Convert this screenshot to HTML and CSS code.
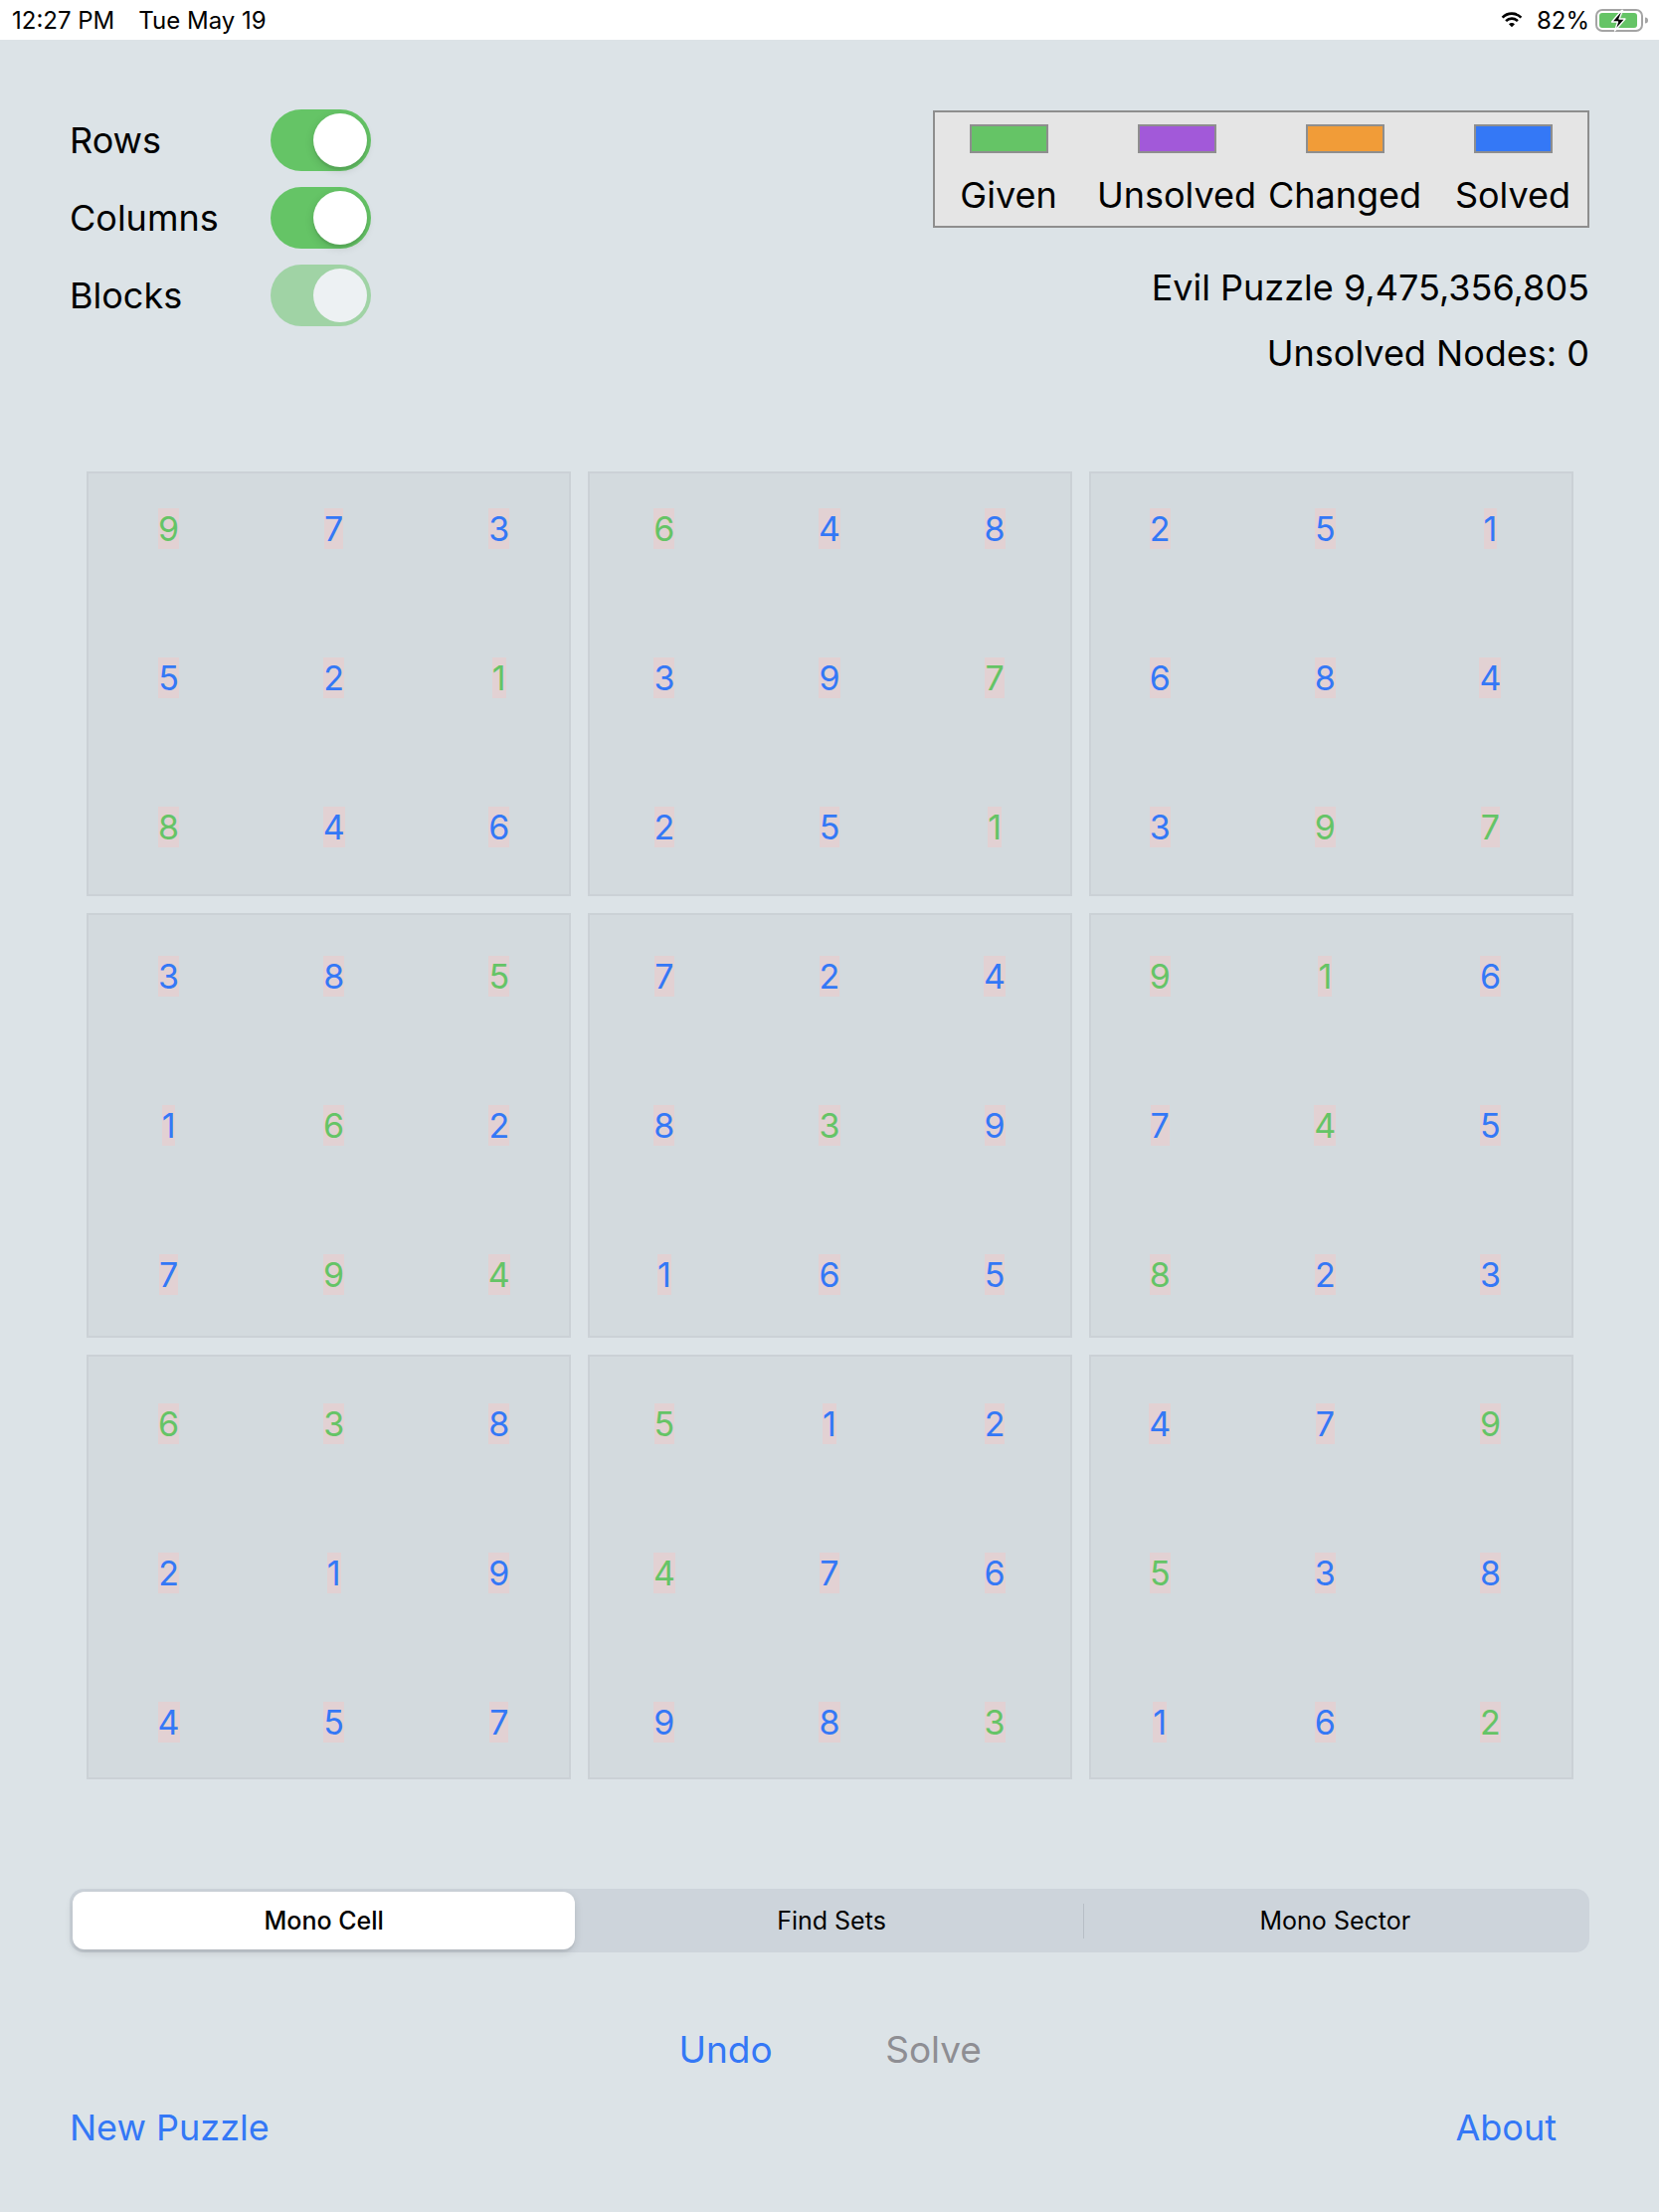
FILE: index.html
```html
<!DOCTYPE html>
<html>
<head>
<meta charset="utf-8">
<link rel="stylesheet" href="styles.css">
</head>
<body>
<div class="status">
  <div class="status-left"><span>12:27 PM</span><span class="date">Tue May 19</span></div>
  <div class="status-right">
    <svg class="wifi" width="22" height="17" viewBox="0 0 22 17">
      <path d="M1.6 6.6 A13.2 13.2 0 0 1 20.4 6.6" fill="none" stroke="#000" stroke-width="2.6"/>
      <path d="M5.1 10.1 A8.3 8.3 0 0 1 16.9 10.1" fill="none" stroke="#000" stroke-width="2.6"/>
      <path d="M8 13.2 A4.2 4.2 0 0 1 14 13.2 L11 16.3 Z" fill="#000"/>
    </svg>
    <span class="pct">82%</span>
    <svg class="battery" width="54" height="24" viewBox="0 0 54 24">
      <rect x="1" y="1" width="46" height="21" rx="6" fill="none" stroke="#a4a4a4" stroke-width="2"/>
      <rect x="4" y="4" width="38" height="15" rx="3" fill="#65c466"/>
      <path d="M50 8.5 v6 a3 3 0 0 0 0 -6z" fill="#a4a4a4"/>
      <path d="M26.5 1.5 L16.5 13 H22.5 L19.5 22 L30 10 H24 L27.5 1.5 Z" fill="#000" stroke="#fff" stroke-width="1.4" stroke-linejoin="round"/>
    </svg>
  </div>
</div>

<div class="top">
  <div class="toggles">
    <div class="toggle-row"><span class="toggle-label">Rows</span><span class="switch"><span class="knob"></span></span></div>
    <div class="toggle-row"><span class="toggle-label">Columns</span><span class="switch"><span class="knob"></span></span></div>
    <div class="toggle-row disabled"><span class="toggle-label">Blocks</span><span class="switch"><span class="knob"></span></span></div>
  </div>
  <div class="info">
    <div class="legend">
      <div class="legend-item"><span class="swatch given"></span><span class="legend-label">Given</span></div>
      <div class="legend-item"><span class="swatch unsolved"></span><span class="legend-label">Unsolved</span></div>
      <div class="legend-item"><span class="swatch changed"></span><span class="legend-label">Changed</span></div>
      <div class="legend-item"><span class="swatch solved"></span><span class="legend-label">Solved</span></div>
    </div>
    <div class="info-line first">Evil Puzzle 9,475,356,805</div>
    <div class="info-line">Unsolved Nodes: 0</div>
  </div>
</div>

<div class="board">
  <div class="blocks">
    <div class="block"></div><div class="block"></div><div class="block"></div>
    <div class="block"></div><div class="block"></div><div class="block"></div>
    <div class="block"></div><div class="block"></div><div class="block"></div>
  </div>
  <div class="digits">
    <div class="cell"><span class="d g">9</span></div><div class="cell"><span class="d b">7</span></div><div class="cell"><span class="d b">3</span></div><div class="cell"><span class="d g">6</span></div><div class="cell"><span class="d b">4</span></div><div class="cell"><span class="d b">8</span></div><div class="cell"><span class="d b">2</span></div><div class="cell"><span class="d b">5</span></div><div class="cell"><span class="d b">1</span></div>
    <div class="cell"><span class="d b">5</span></div><div class="cell"><span class="d b">2</span></div><div class="cell"><span class="d g">1</span></div><div class="cell"><span class="d b">3</span></div><div class="cell"><span class="d b">9</span></div><div class="cell"><span class="d g">7</span></div><div class="cell"><span class="d b">6</span></div><div class="cell"><span class="d b">8</span></div><div class="cell"><span class="d b">4</span></div>
    <div class="cell"><span class="d g">8</span></div><div class="cell"><span class="d b">4</span></div><div class="cell"><span class="d b">6</span></div><div class="cell"><span class="d b">2</span></div><div class="cell"><span class="d b">5</span></div><div class="cell"><span class="d g">1</span></div><div class="cell"><span class="d b">3</span></div><div class="cell"><span class="d g">9</span></div><div class="cell"><span class="d g">7</span></div>
    <div class="cell"><span class="d b">3</span></div><div class="cell"><span class="d b">8</span></div><div class="cell"><span class="d g">5</span></div><div class="cell"><span class="d b">7</span></div><div class="cell"><span class="d b">2</span></div><div class="cell"><span class="d b">4</span></div><div class="cell"><span class="d g">9</span></div><div class="cell"><span class="d g">1</span></div><div class="cell"><span class="d b">6</span></div>
    <div class="cell"><span class="d b">1</span></div><div class="cell"><span class="d g">6</span></div><div class="cell"><span class="d b">2</span></div><div class="cell"><span class="d b">8</span></div><div class="cell"><span class="d g">3</span></div><div class="cell"><span class="d b">9</span></div><div class="cell"><span class="d b">7</span></div><div class="cell"><span class="d g">4</span></div><div class="cell"><span class="d b">5</span></div>
    <div class="cell"><span class="d b">7</span></div><div class="cell"><span class="d g">9</span></div><div class="cell"><span class="d g">4</span></div><div class="cell"><span class="d b">1</span></div><div class="cell"><span class="d b">6</span></div><div class="cell"><span class="d b">5</span></div><div class="cell"><span class="d g">8</span></div><div class="cell"><span class="d b">2</span></div><div class="cell"><span class="d b">3</span></div>
    <div class="cell"><span class="d g">6</span></div><div class="cell"><span class="d g">3</span></div><div class="cell"><span class="d b">8</span></div><div class="cell"><span class="d g">5</span></div><div class="cell"><span class="d b">1</span></div><div class="cell"><span class="d b">2</span></div><div class="cell"><span class="d b">4</span></div><div class="cell"><span class="d b">7</span></div><div class="cell"><span class="d g">9</span></div>
    <div class="cell"><span class="d b">2</span></div><div class="cell"><span class="d b">1</span></div><div class="cell"><span class="d b">9</span></div><div class="cell"><span class="d g">4</span></div><div class="cell"><span class="d b">7</span></div><div class="cell"><span class="d b">6</span></div><div class="cell"><span class="d g">5</span></div><div class="cell"><span class="d b">3</span></div><div class="cell"><span class="d b">8</span></div>
    <div class="cell"><span class="d b">4</span></div><div class="cell"><span class="d b">5</span></div><div class="cell"><span class="d b">7</span></div><div class="cell"><span class="d b">9</span></div><div class="cell"><span class="d b">8</span></div><div class="cell"><span class="d g">3</span></div><div class="cell"><span class="d b">1</span></div><div class="cell"><span class="d b">6</span></div><div class="cell"><span class="d g">2</span></div>
  </div>
</div>

<div class="seg">
  <div class="seg-item selected">Mono Cell</div>
  <div class="seg-item">Find Sets</div>
  <div class="seg-divider"></div>
  <div class="seg-item">Mono Sector</div>
</div>

<div class="actions">
  <span class="btn blue">Undo</span>
  <span class="btn gray">Solve</span>
</div>

<div class="footer">
  <span class="btn blue">New Puzzle</span>
  <span class="btn blue">About</span>
</div>
</body>
</html>
```

FILE: styles.css
```css
html, body {
  margin: 0;
  padding: 0;
}
body {
  width: 1668px;
  height: 2224px;
  background: #dce3e7;
  font-family: Inter, "Liberation Sans", sans-serif;
  color: #000;
  overflow: hidden;
}

/* status bar */
.status {
  height: 40px;
  background: #ffffff;
  display: flex;
  justify-content: space-between;
  align-items: center;
  padding: 0 10px 0 12px;
  font-size: 24px;
  box-sizing: border-box;
}
.status-left .date { margin-left: 24px; }
.status-right {
  display: flex;
  align-items: center;
}
.wifi { margin-right: 14px; margin-top: -2px; }
.pct { margin-right: 6px; }
.battery { margin-top: 2px; }

/* header */
.top {
  height: 434px;
  box-sizing: border-box;
  padding: 70px 70px 0 70px;
  display: flex;
  justify-content: space-between;
  align-items: flex-start;
}
.toggles {
  display: flex;
  flex-direction: column;
  gap: 16px;
}
.toggle-row {
  display: flex;
  align-items: center;
  height: 62px;
}
.toggle-label {
  width: 202px;
  font-size: 36px;
}
.switch {
  width: 101px;
  height: 62px;
  border-radius: 31px;
  background: #65c466;
  position: relative;
  display: block;
}
.knob {
  position: absolute;
  top: 4px;
  right: 4px;
  width: 54px;
  height: 54px;
  border-radius: 50%;
  background: #ffffff;
  box-shadow: 0 3px 8px rgba(0, 0, 0, 0.15), 0 3px 1px rgba(0, 0, 0, 0.06);
}
.toggle-row.disabled .switch { opacity: 0.5; }
.toggle-row.disabled .knob { box-shadow: none; }

.info {
  width: 660px;
  margin-top: 1px;
  text-align: right;
}
.legend {
  width: 660px;
  height: 118px;
  box-sizing: border-box;
  border: 2px solid #8e8e8e;
  background: #e5e5e5;
  display: flex;
  gap: 49px;
  padding-left: 14px;
}
.legend-item {
  width: 120px;
  display: flex;
  flex-direction: column;
  align-items: center;
}
.swatch {
  display: block;
  width: 79px;
  height: 29px;
  box-sizing: border-box;
  border: 2px solid #8e8e8e;
  margin-top: 12px;
}
.swatch.given { background: #65c466; }
.swatch.unsolved { background: #a259d9; }
.swatch.changed { background: #f19c38; }
.swatch.solved { background: #3478f6; }
.legend-label {
  font-size: 36px;
  line-height: 44px;
  margin-top: 20px;
  white-space: nowrap;
}
.info-line {
  font-size: 36px;
  line-height: 44px;
  margin-top: 22px;
  white-space: nowrap;
}
.info-line.first { margin-top: 38px; }

/* board */
.board {
  position: relative;
  width: 1495px;
  height: 1315px;
  margin: 0 auto;
}
.blocks {
  display: grid;
  grid-template-columns: repeat(3, 487px);
  grid-template-rows: repeat(3, 427px);
  gap: 17px;
}
.block {
  background: #d3dade;
  border: 2px solid #cbd1d6;
  box-sizing: border-box;
}
.digits {
  position: absolute;
  left: 0;
  right: 0;
  top: -18px;
  bottom: -18px;
  display: grid;
  grid-template-columns: repeat(9, 1fr);
  grid-template-rows: repeat(9, 1fr);
}
.cell {
  display: flex;
  align-items: center;
  justify-content: center;
}
.d {
  font-size: 34px;
  line-height: 41px;
  background: #e2d1d3;
}
.d.g { color: #65c466; }
.d.b { color: #3478f6; }

/* segmented control */
.seg {
  margin: 110px 70px 0 70px;
  height: 64px;
  box-sizing: border-box;
  padding: 3px;
  background: #cdd4db;
  border-radius: 14px;
  display: flex;
  align-items: stretch;
}
.seg-item {
  flex: 1;
  display: flex;
  align-items: center;
  justify-content: center;
  font-size: 25px;
  border-radius: 12px;
}
.seg-item.selected {
  background: #ffffff;
  font-weight: 500;
  margin-right: 5px;
  box-shadow: 0 3px 8px rgba(0, 0, 0, 0.12), 0 3px 1px rgba(0, 0, 0, 0.04);
}
.seg-divider {
  width: 1px;
  height: 35px;
  align-self: center;
  background: #b7bec6;
}

/* buttons */
.btn {
  font-size: 37px;
  line-height: 44px;
}
.blue { color: #3478f6; }
.gray { color: #8e8e93; }
.actions {
  display: flex;
  justify-content: center;
  margin-top: 76px;
}
.actions .btn {
  width: 209px;
  text-align: center;
}
.footer {
  display: flex;
  justify-content: space-between;
  margin-top: 34px;
  padding: 0 103px 0 70px;
}
.footer .btn { font-size: 36px; }
```
